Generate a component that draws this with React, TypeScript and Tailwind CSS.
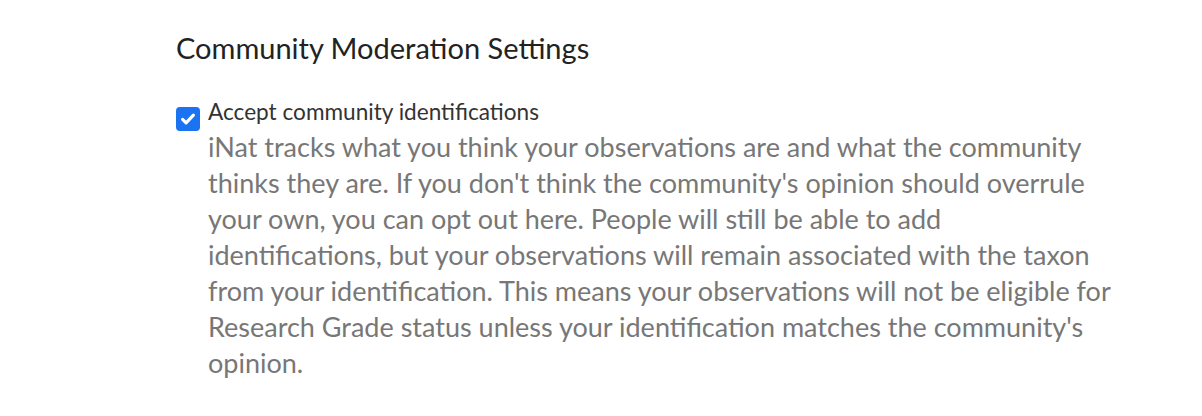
export default function App() {
  return (
    <div className="w-[1202px] h-[416px] bg-white font-['Lato',sans-serif] pl-[176px] pt-[30px]">
      <h2 className="text-[29px] leading-[36px] text-[#222]">Community Moderation Settings</h2>
      <div className="flex gap-[8px] mt-[29px]">
        <div className="pt-[12px]">
          <div className="w-[24px] h-[24px] rounded-[4px] bg-[#1a73f0] flex items-center justify-center">
            <svg width="18" height="18" viewBox="0 0 16 16" fill="none">
              <path d="M3.2 8.4l3.1 3.1L12.8 4.6" stroke="white" strokeWidth="2.8" strokeLinecap="round" strokeLinejoin="round" />
            </svg>
          </div>
        </div>
        <div className="w-[904px]">
          <label className="block text-[22.6px] leading-[34px] text-[#333]">Accept community identifications</label>
          <p className="text-[27px] leading-[36px] text-[#777]">
            iNat tracks what you think your observations are and what the community thinks they are. If you don't think the community's opinion should overrule your own, you can opt out here. People will still be able to add identifications, but your observations will remain associated with the taxon from your identification. This means your observations will not be eligible for Research Grade status unless your identification matches the community's opinion.
          </p>
        </div>
      </div>
    </div>
  );
}
